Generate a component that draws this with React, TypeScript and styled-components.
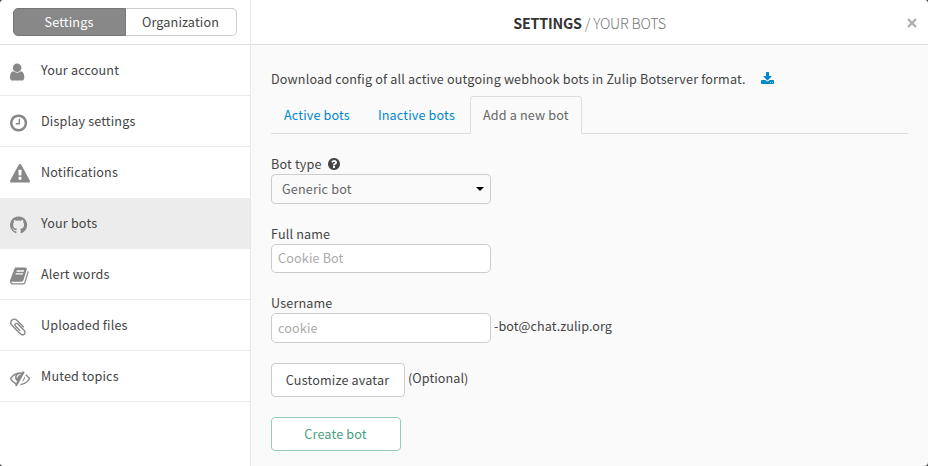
import React from "react";
import styled, { createGlobalStyle } from "styled-components";

const GlobalStyle = createGlobalStyle`
  *, *::before, *::after { box-sizing: border-box; }
  body {
    margin: 0;
    background: #444;
    font-family: "Noto Sans CJK SC", "Open Sans", sans-serif;
    font-size: 12.6px;
    line-height: 20px;
    color: #444;
  }
  button, input { font: inherit; letter-spacing: inherit; color: inherit; }
`;

const Modal = styled.div`
  display: grid;
  grid-template-columns: 251px 1fr;
  width: 928px;
  height: 466px;
  overflow: hidden;
  border-radius: 4px;
  background: #fafafa;
  letter-spacing: 0.16px;
`;

const Sidebar = styled.aside`
  border-right: 1px solid #e8e8e8;
  background: #fff;
`;

const SwitchBar = styled.div`
  display: flex;
  height: 45px;
  padding: 8px 13px 0;
  border-bottom: 1px solid #ddd;
`;

const SwitchButton = styled.button<{ $active?: boolean }>`
  width: ${(p) => (p.$active ? 113 : 111)}px;
  height: 28px;
  padding: 0 1px 0 0;
  border: 1px solid ${(p) => (p.$active ? "#777" : "#ccc")};
  border-left-width: ${(p) => (p.$active ? 1 : 0)}px;
  border-radius: ${(p) => (p.$active ? "5px 0 0 5px" : "0 5px 5px 0")};
  background: ${(p) => (p.$active ? "#888" : "#fff")};
  color: ${(p) => (p.$active ? "#fff" : "#444")};
`;

const NavItem = styled.div<{ $active?: boolean }>`
  display: flex;
  align-items: flex-start;
  height: 51px;
  padding: 0 10px;
  border-bottom: 1px solid ${(p) => (p.$active ? "#ececec" : "#e9e9e9")};
  background: ${(p) => (p.$active ? "#ececec" : "#fff")};
  &:has(+ [aria-current="page"]) { border-bottom-color: #fff; }
`;

const NavIcon = styled.svg`
  width: 20px;
  height: 20px;
  margin: 17px 11px 0 0;
  fill: #888;
`;

const NavLabel = styled.span`
  margin-top: 15px;
`;

const Main = styled.main`
  min-width: 0;
`;

const Header = styled.header`
  display: grid;
  grid-template-columns: 38px 1fr 38px;
  height: 45px;
  border-bottom: 1px solid #ddd;
  background: #fff;
`;

const Title = styled.h1`
  grid-column: 2;
  margin: 13px 0 0;
  font-size: 14.3px;
  line-height: 20px;
  font-weight: 300;
  letter-spacing: -0.2px;
  text-align: center;
  color: #777;
  b { font-weight: 700; color: #333; }
`;

const Close = styled.svg`
  width: 10px;
  height: 10px;
  margin: 18px 0 0 17px;
  stroke: #aaa;
  stroke-width: 2.1;
`;

const Content = styled.div`
  padding: 24px 20px 0;
`;

const Download = styled.p`
  display: flex;
  gap: 15px;
  margin: 0;
`;

const DownloadIcon = styled.svg`
  width: 14px;
  height: 14px;
  margin-top: 3px;
  fill: #08c;
`;

const Tabs = styled.div`
  display: flex;
  height: 38px;
  margin: 7px 0 20px;
  border-bottom: 1px solid #ddd;
`;

const Tab = styled.div<{ $active?: boolean }>`
  height: 38px;
  margin-right: 2px;
  padding: 8px 12px;
  border: 1px solid ${(p) => (p.$active ? "#ddd" : "transparent")};
  border-bottom-color: ${(p) => (p.$active ? "#fafafa" : "transparent")};
  border-radius: 4px 4px 0 0;
  color: ${(p) => (p.$active ? "#666" : "#08c")};
  white-space: nowrap;
`;

const Field = styled.div<{ $height: number }>`
  height: ${(p) => p.$height}px;
`;

const Label = styled.label`
  display: flex;
  gap: 6px;
  height: 20px;
`;

const HelpIcon = styled.svg`
  width: 14px;
  height: 14px;
  margin-top: 3px;
  fill: #444;
`;

const Select = styled.div`
  display: flex;
  justify-content: space-between;
  width: 220px;
  height: 30px;
  padding: 4px 6px 0 10px;
  border: 1px solid #ccc;
  border-radius: 4px;
  color: #666;
`;

const Caret = styled.svg`
  width: 8px;
  height: 4px;
  margin-top: 8px;
`;

const InputRow = styled.div`
  display: flex;
  gap: 3px;
`;

const Input = styled.input<{ $height?: number }>`
  width: 220px;
  height: ${(p) => p.$height ?? 29}px;
  padding: 0 6px ${(p) => (p.$height ? 1 : 2)}px;
  border: 1px solid #ccc;
  border-radius: 5px;
  background: #fff;
  &::placeholder { color: #aaa; opacity: 1; }
`;

const Hint = styled.span<{ $top: number }>`
  margin-top: ${(p) => p.$top}px;
  letter-spacing: 0.08px;
`;

const Button = styled.button<{ $width: number; $primary?: boolean }>`
  width: ${(p) => p.$width}px;
  height: 34px;
  padding: 0 1px 0 0;
  border: 1px solid ${(p) => (p.$primary ? "#97cbb8" : "#ccc")};
  border-radius: 4px;
  background: #fff;
  color: ${(p) => (p.$primary ? "#4a9d7f" : "#444")};
`;

const AvatarRow = styled.div`
  display: flex;
  gap: 3px;
  margin-bottom: 20px;
`;

const helpPath =
  "M1024 1376v-192q0-14-9-23t-23-9h-192q-14 0-23 9t-9 23v192q0 14 9 23t23 9h192q14 0 23-9t9-23zm256-672q0-88-55.5-163t-138.5-116-170-41q-243 0-371 213-15 24 8 42l132 100q7 6 19 6 16 0 25-12 53-68 86-92 34-24 86-24 48 0 85.5 26t37.5 59q0 38-20 61t-68 45q-63 28-115.5 86.5t-52.5 125.5v36q0 14 9 23t23 9h192q14 0 23-9t9-23q0-19 21.5-49.5t54.5-49.5q32-18 49-28.5t46-35 44.5-48 28-60.5 12.5-81zm384 192q0 209-103 385.5t-279.5 279.5-385.5 103-385.5-103-279.5-279.5-103-385.5 103-385.5 279.5-279.5 385.5-103 385.5 103 279.5 279.5 103 385.5z";

const downloadPath =
  "M1344 1344q0-26-19-45t-45-19-45 19-19 45 19 45 45 19 45-19 19-45zm256 0q0-26-19-45t-45-19-45 19-19 45 19 45 45 19 45-19 19-45zm128-224v320q0 40-28 68t-68 28h-1472q-40 0-68-28t-28-68v-320q0-40 28-68t68-28h465l135 136q58 56 136 56t136-56l136-136h464q40 0 68 28t28 68zm-325-569q17 41-14 70l-448 448q-18 19-45 19t-45-19l-448-448q-31-29-14-70 17-39 59-39h256v-448q0-26 19-45t45-19h256q26 0 45 19t19 45v448h256q42 0 59 39z";

const navItems = [
  {
    label: "Your account",
    left: 256,
    path: "M1536 1399q0 109-62.5 187t-150.5 78h-854q-88 0-150.5-78t-62.5-187q0-85 8.5-160.5t31.5-152 58.5-131 94-89 134.5-34.5q131 128 313 128t313-128q76 0 134.5 34.5t94 89 58.5 131 31.5 152 8.5 160.5zm-256-887q0 159-112.5 271.5t-271.5 112.5-271.5-112.5-112.5-271.5 112.5-271.5 271.5-112.5 271.5 112.5 112.5 271.5z",
  },
  {
    label: "Display settings",
    left: 128,
    path: "M1024 544v448q0 14-9 23t-23 9h-320q-14 0-23-9t-9-23v-64q0-14 9-23t23-9h224v-352q0-14 9-23t23-9h64q14 0 23 9t9 23zm416 352q0-148-73-273t-198-198-273-73-273 73-198 198-73 273 73 273 198 198 273 73 273-73 198-198 73-273zm224 0q0 209-103 385.5t-279.5 279.5-385.5 103-385.5-103-279.5-279.5-103-385.5 103-385.5 279.5-279.5 385.5-103 385.5 103 279.5 279.5 103 385.5z",
  },
  {
    label: "Notifications",
    left: 0,
    path: "M1024 1375v-190q0-14-9.5-23.5t-22.5-9.5h-192q-13 0-22.5 9.5t-9.5 23.5v190q0 14 9.5 23.5t22.5 9.5h192q13 0 22.5-9.5t9.5-23.5zm-2-374l18-459q0-12-10-19-13-11-24-11h-220q-11 0-24 11-10 7-10 21l17 457q0 10 10 16.5t24 6.5h185q14 0 23.5-6.5t10.5-16.5zm-14-934l768 1408q35 63-2 126-17 29-46.5 46t-63.5 17h-1536q-34 0-63.5-17t-46.5-46q-37-63-2-126l768-1408q17-31 47-49t65-18 65 18 47 49z",
  },
  {
    label: "Your bots",
    left: 128,
    active: true,
    path: "M896 128q209 0 385.5 103t279.5 279.5 103 385.5q0 251-146.5 451.5t-378.5 277.5q-27 5-40-7t-13-30q0-3 .5-76.5t.5-134.5q0-97-52-142 57-6 102.5-18t94-39 81-66.5 53-105 20.5-150.5q0-119-79-206 37-91-8-204-28-9-81 11t-92 44l-38 24q-93-26-192-26t-192 26q-16-11-42.5-27t-83.5-38.5-85-13.5q-45 113-8 204-79 87-79 206 0 85 20.5 150t52.5 105 80.5 67 94 39 102.5 18q-39 36-49 103-21 10-45 15t-57 5-65.5-21.5-55.5-62.5q-19-32-48.5-52t-49.5-24l-20-3q-21 0-29 4.5t-5 11.5 9 14 13 12l7 5q22 10 43.5 38t31.5 51l10 23q13 38 44 61.5t67 30 69.5 7 55.5-3.5l23-4q0 38 .5 88.5t.5 54.5q0 18-13 30t-40 7q-232-77-378.5-277.5t-146.5-451.5q0-209 103-385.5t279.5-279.5 385.5-103z",
  },
  {
    label: "Alert words",
    left: 64,
    path: "M1703 478q40 57 18 129l-275 906q-19 64-76.5 107.5t-122.5 43.5h-923q-77 0-148.5-53.5t-99.5-131.5q-24-67-2-127 0-4 3-27t4-37q1-8-3-21.5t-3-19.5q2-11 8-21t16.5-23.5 16.5-23.5q23-38 45-91.5t30-91.5q3-10 .5-30t-.5-28q3-11 17-28t17-23q21-36 42-92t25-90q1-9-2.5-32t.5-28q4-13 22-30.5t22-22.5q19-26 42.5-84.5t27.5-96.5q1-8-3-25.5t-2-26.5q2-8 9-18t18-23 17-21q8-12 16.5-30.5t15-35 16-36 19.5-32 26.5-23.5 36-11.5 47.5 5.5l-1 3q38-9 51-9h761q74 0 114 56t18 130l-274 906q-36 119-71.5 153.5t-128.5 34.5h-869q-27 0-38 15-11 16-1 43 24 70 144 70h923q29 0 56-15.5t35-41.5l300-987q7-22 5-57 38 15 59 43zm-1064 2q-4 13 2 22.5t20 9.5h608q13 0 25.5-9.5t16.5-22.5l21-64q4-13-2-22.5t-20-9.5h-608q-13 0-25.5 9.5t-16.5 22.5zm-83 256q-4 13 2 22.5t20 9.5h608q13 0 25.5-9.5t16.5-22.5l21-64q4-13-2-22.5t-20-9.5h-608q-13 0-25.5 9.5t-16.5 22.5z",
  },
  {
    label: "Uploaded files",
    left: 192,
    path: "M1596 1385q0 117-79 196t-196 79q-135 0-235-100l-777-776q-113-115-113-271 0-159 110-270t269-111q158 0 273 113l605 606q10 10 10 22 0 16-30.5 46.5t-46.5 30.5q-13 0-23-10l-606-607q-79-77-181-77-106 0-179 75t-73 181q0 105 76 181l776 777q63 63 145 63 64 0 106-42t42-106q0-82-63-145l-581-581q-26-24-60-24-29 0-48 19t-19 48q0 32 25 59l410 410q10 10 10 22 0 16-31 47t-47 31q-12 0-22-10l-410-410q-63-61-63-149 0-82 57-139t139-57q88 0 149 63l581 581q100 98 100 235z",
  },
  {
    label: "Muted topics",
    left: 0,
    path: "M555 1335l78-141q-87-63-136-159t-49-203q0-121 61-225-229 117-381 353 167 258 427 375zm389-759q0-20-14-34t-34-14q-125 0-214.5 89.5t-89.5 214.5q0 20 14 34t34 14 34-14 14-34q0-86 61-147t147-61q20 0 34-14t14-34zm363-191q0 7-1 9-106 189-316 567t-315 566l-49 89q-10 16-28 16-12 0-134-70-16-10-16-28 0-12 44-87-143-65-263.5-173t-208.5-245q-20-31-20-69t20-69q153-235 380-371t496-136q89 0 180 17l54-97q10-16 28-16 5 0 18 6t31 15.5 33 18.5 31.5 18.5 19.5 11.5q16 10 16 27zm37 447q0 139-79 253.5t-209 164.5l280-502q8 45 8 84zm448 128q0 35-20 69-39 64-109 145-150 172-347.5 267t-419.5 95l74-132q212-18 392.5-137t301.5-307q-115-179-282-294l63-112q95 64 182.5 153t144.5 184q20 34 20 69z",
  },
];

export default function App() {
  return (
    <>
      <GlobalStyle />
      <Modal>
        <Sidebar>
          <SwitchBar>
            <SwitchButton $active>Settings</SwitchButton>
            <SwitchButton>Organization</SwitchButton>
          </SwitchBar>
          {navItems.map((item) => (
            <NavItem
              key={item.label}
              $active={item.active}
              aria-current={item.active ? "page" : undefined}
            >
              <NavIcon viewBox={`${item.left} 0 1792 1792`}>
                <path d={item.path} />
              </NavIcon>
              <NavLabel>{item.label}</NavLabel>
            </NavItem>
          ))}
        </Sidebar>
        <Main>
          <Header>
            <Title>
              <b>SETTINGS</b> / YOUR BOTS
            </Title>
            <Close viewBox="0 0 10 10">
              <path d="M1 1L9 9M9 1L1 9" />
            </Close>
          </Header>
          <Content>
            <Download>
              <span>Download config of all active outgoing webhook bots in Zulip Botserver format.</span>
              <DownloadIcon viewBox="64 0 1792 1792">
                <path d={downloadPath} />
              </DownloadIcon>
            </Download>
            <Tabs>
              <Tab>Active bots</Tab>
              <Tab>Inactive bots</Tab>
              <Tab $active>Add a new bot</Tab>
            </Tabs>
            <Field $height={70}>
              <Label>
                Bot type
                <HelpIcon viewBox="128 0 1792 1792">
                  <path d={helpPath} />
                </HelpIcon>
              </Label>
              <Select>
                Generic bot
                <Caret viewBox="0 0 8 4">
                  <path d="M0 0H8L4 4Z" />
                </Caret>
              </Select>
            </Field>
            <Field $height={69}>
              <Label>Full name</Label>
              <Input placeholder="Cookie Bot" />
            </Field>
            <Field $height={70}>
              <Label>Username</Label>
              <InputRow>
                <Input $height={30} placeholder="cookie" />
                <Hint $top={3}>-bot@chat.zulip.org</Hint>
              </InputRow>
            </Field>
            <AvatarRow>
              <Button $width={134}>Customize avatar</Button>
              <Hint $top={5}>(Optional)</Hint>
            </AvatarRow>
            <Button $width={130} $primary>
              Create bot
            </Button>
          </Content>
        </Main>
      </Modal>
    </>
  );
}
